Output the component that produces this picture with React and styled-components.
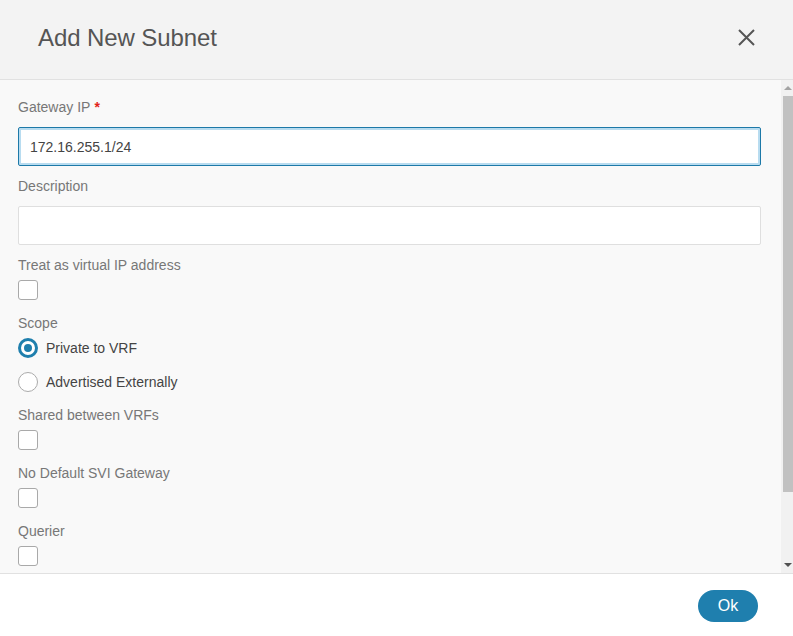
import styled, { createGlobalStyle } from 'styled-components';

const GlobalStyle = createGlobalStyle`
  html, body {
    margin: 0;
    padding: 0;
    background: #ffffff;
  }
  body {
    font-family: 'Liberation Sans', Arial, sans-serif;
    overflow: hidden;
  }
  * {
    box-sizing: border-box;
  }
`;

const Dialog = styled.div`
  width: 793px;
  height: 636px;
  display: flex;
  flex-direction: column;
  background: #fff;
`;

const Header = styled.header`
  height: 80px;
  flex-shrink: 0;
  display: flex;
  align-items: center;
  justify-content: space-between;
  padding: 0 38px 0 38px;
  background: #f3f3f3;
  border-bottom: 1px solid #e1e1e1;
`;

const Title = styled.h2`
  margin: 0;
  margin-top: -4px;
  font-size: 24px;
  font-weight: normal;
  color: #555;
  letter-spacing: -0.1px;
`;

const CloseButton = styled.button`
  width: 20px;
  height: 20px;
  padding: 0;
  margin-right: -1px;
  margin-top: -4px;
  border: none;
  background: none;
  display: flex;
  align-items: center;
  justify-content: center;
  cursor: pointer;
`;

const Body = styled.div`
  flex: 1;
  min-height: 0;
  display: flex;
  background: #f9f9f9;
`;

const Content = styled.div`
  flex: 1;
  overflow: hidden;
  padding: 17px 20px 0 18px;
`;

const Group = styled.div`
  display: flex;
  flex-direction: column;
  margin-bottom: ${({ $after = 10 }) => $after}px;
`;

const Label = styled.label`
  font-size: 14px;
  line-height: 20px;
  color: #777;
  margin-bottom: ${({ $gap }) => $gap}px;
`;

const Required = styled.span`
  color: #e2231a;
  font-weight: bold;
  margin-left: 4px;
`;

const TextInput = styled.input`
  height: 39px;
  width: 100%;
  padding: 0 11px;
  font-family: inherit;
  font-size: 14px;
  color: #444;
  background: #fff;
  border: 1px solid ${({ $focused }) => ($focused ? '#1d79a8' : '#dfdfdf')};
  border-radius: 2px;
  outline: none;
  box-shadow: ${({ $focused }) => ($focused ? 'inset 0 0 0 2px #b8dcf0' : 'none')};
`;

const CheckRow = styled.div`
  height: 23px;
`;

const Checkbox = styled.span`
  display: block;
  width: 20px;
  height: 20px;
  background: #fff;
  border: 1px solid #a9a9a9;
  border-radius: 3px;
`;

const RadioList = styled.div`
  display: flex;
  flex-direction: column;
  gap: 12px;
`;

const RadioRow = styled.div`
  display: flex;
  align-items: center;
  gap: 8px;
  height: 22px;
  font-size: 14px;
  color: #444;
`;

const Radio = styled.span`
  width: 20px;
  height: 20px;
  border-radius: 50%;
  background: #fff;
  border: ${({ $checked }) => ($checked ? '3px solid #1f7fad' : '1px solid #ababab')};
  display: flex;
  align-items: center;
  justify-content: center;
  &::after {
    content: '';
    display: ${({ $checked }) => ($checked ? 'block' : 'none')};
    width: 8px;
    height: 8px;
    border-radius: 50%;
    background: #1f7fad;
  }
`;

const ScrollTrack = styled.div`
  width: 12px;
  flex-shrink: 0;
  background: #f1f1f1;
  display: flex;
  flex-direction: column;
  align-items: flex-end;
`;

const ScrollArrow = styled.div`
  height: 16px;
  width: 10px;
  display: flex;
  align-items: center;
  justify-content: center;
`;

const Triangle = styled.span`
  width: 0;
  height: 0;
  border-left: 4px solid transparent;
  border-right: 4px solid transparent;
  ${({ $up, $color }) =>
    $up ? `border-bottom: 4px solid ${$color};` : `border-top: 4px solid ${$color};`}
`;

const Thumb = styled.div`
  width: 10px;
  height: 396px;
  background: #c1c1c1;
`;

const Spacer = styled.div`
  flex: 1;
`;

const Footer = styled.footer`
  height: 63px;
  flex-shrink: 0;
  display: flex;
  align-items: center;
  justify-content: flex-end;
  padding: 2px 35px 0 0;
  background: #fff;
  border-top: 1px solid #e1e1e1;
`;

const OkButton = styled.button`
  width: 60px;
  height: 32px;
  border: none;
  border-radius: 16px;
  background: #1f7fae;
  color: #fff;
  font-family: inherit;
  font-size: 16px;
  cursor: pointer;
`;

function CheckField({ label }) {
  return (
    <Group>
      <Label $gap={5}>{label}</Label>
      <CheckRow>
        <Checkbox />
      </CheckRow>
    </Group>
  );
}

export default function App() {
  return (
    <>
      <GlobalStyle />
      <Dialog>
        <Header>
          <Title>Add New Subnet</Title>
          <CloseButton aria-label="Close">
            <svg width="17" height="17" viewBox="0 0 17 17">
              <path d="M1 1 L16 16 M16 1 L1 16" stroke="#555" strokeWidth="2" />
            </svg>
          </CloseButton>
        </Header>
        <Body>
          <Content>
            <Group>
              <Label $gap={10}>
                Gateway IP<Required>*</Required>
              </Label>
              <TextInput $focused defaultValue="172.16.255.1/24" />
            </Group>
            <Group>
              <Label $gap={10}>Description</Label>
              <TextInput />
            </Group>
            <CheckField label="Treat as virtual IP address" />
            <Group $after={12}>
              <Label $gap={4}>Scope</Label>
              <RadioList>
                <RadioRow>
                  <Radio $checked />
                  Private to VRF
                </RadioRow>
                <RadioRow>
                  <Radio />
                  Advertised Externally
                </RadioRow>
              </RadioList>
            </Group>
            <CheckField label="Shared between VRFs" />
            <CheckField label="No Default SVI Gateway" />
            <CheckField label="Querier" />
          </Content>
          <ScrollTrack>
            <ScrollArrow>
              <Triangle $up $color="#a3a3a3" />
            </ScrollArrow>
            <Thumb />
            <Spacer />
            <ScrollArrow>
              <Triangle $color="#505050" />
            </ScrollArrow>
          </ScrollTrack>
        </Body>
        <Footer>
          <OkButton>Ok</OkButton>
        </Footer>
      </Dialog>
    </>
  );
}
